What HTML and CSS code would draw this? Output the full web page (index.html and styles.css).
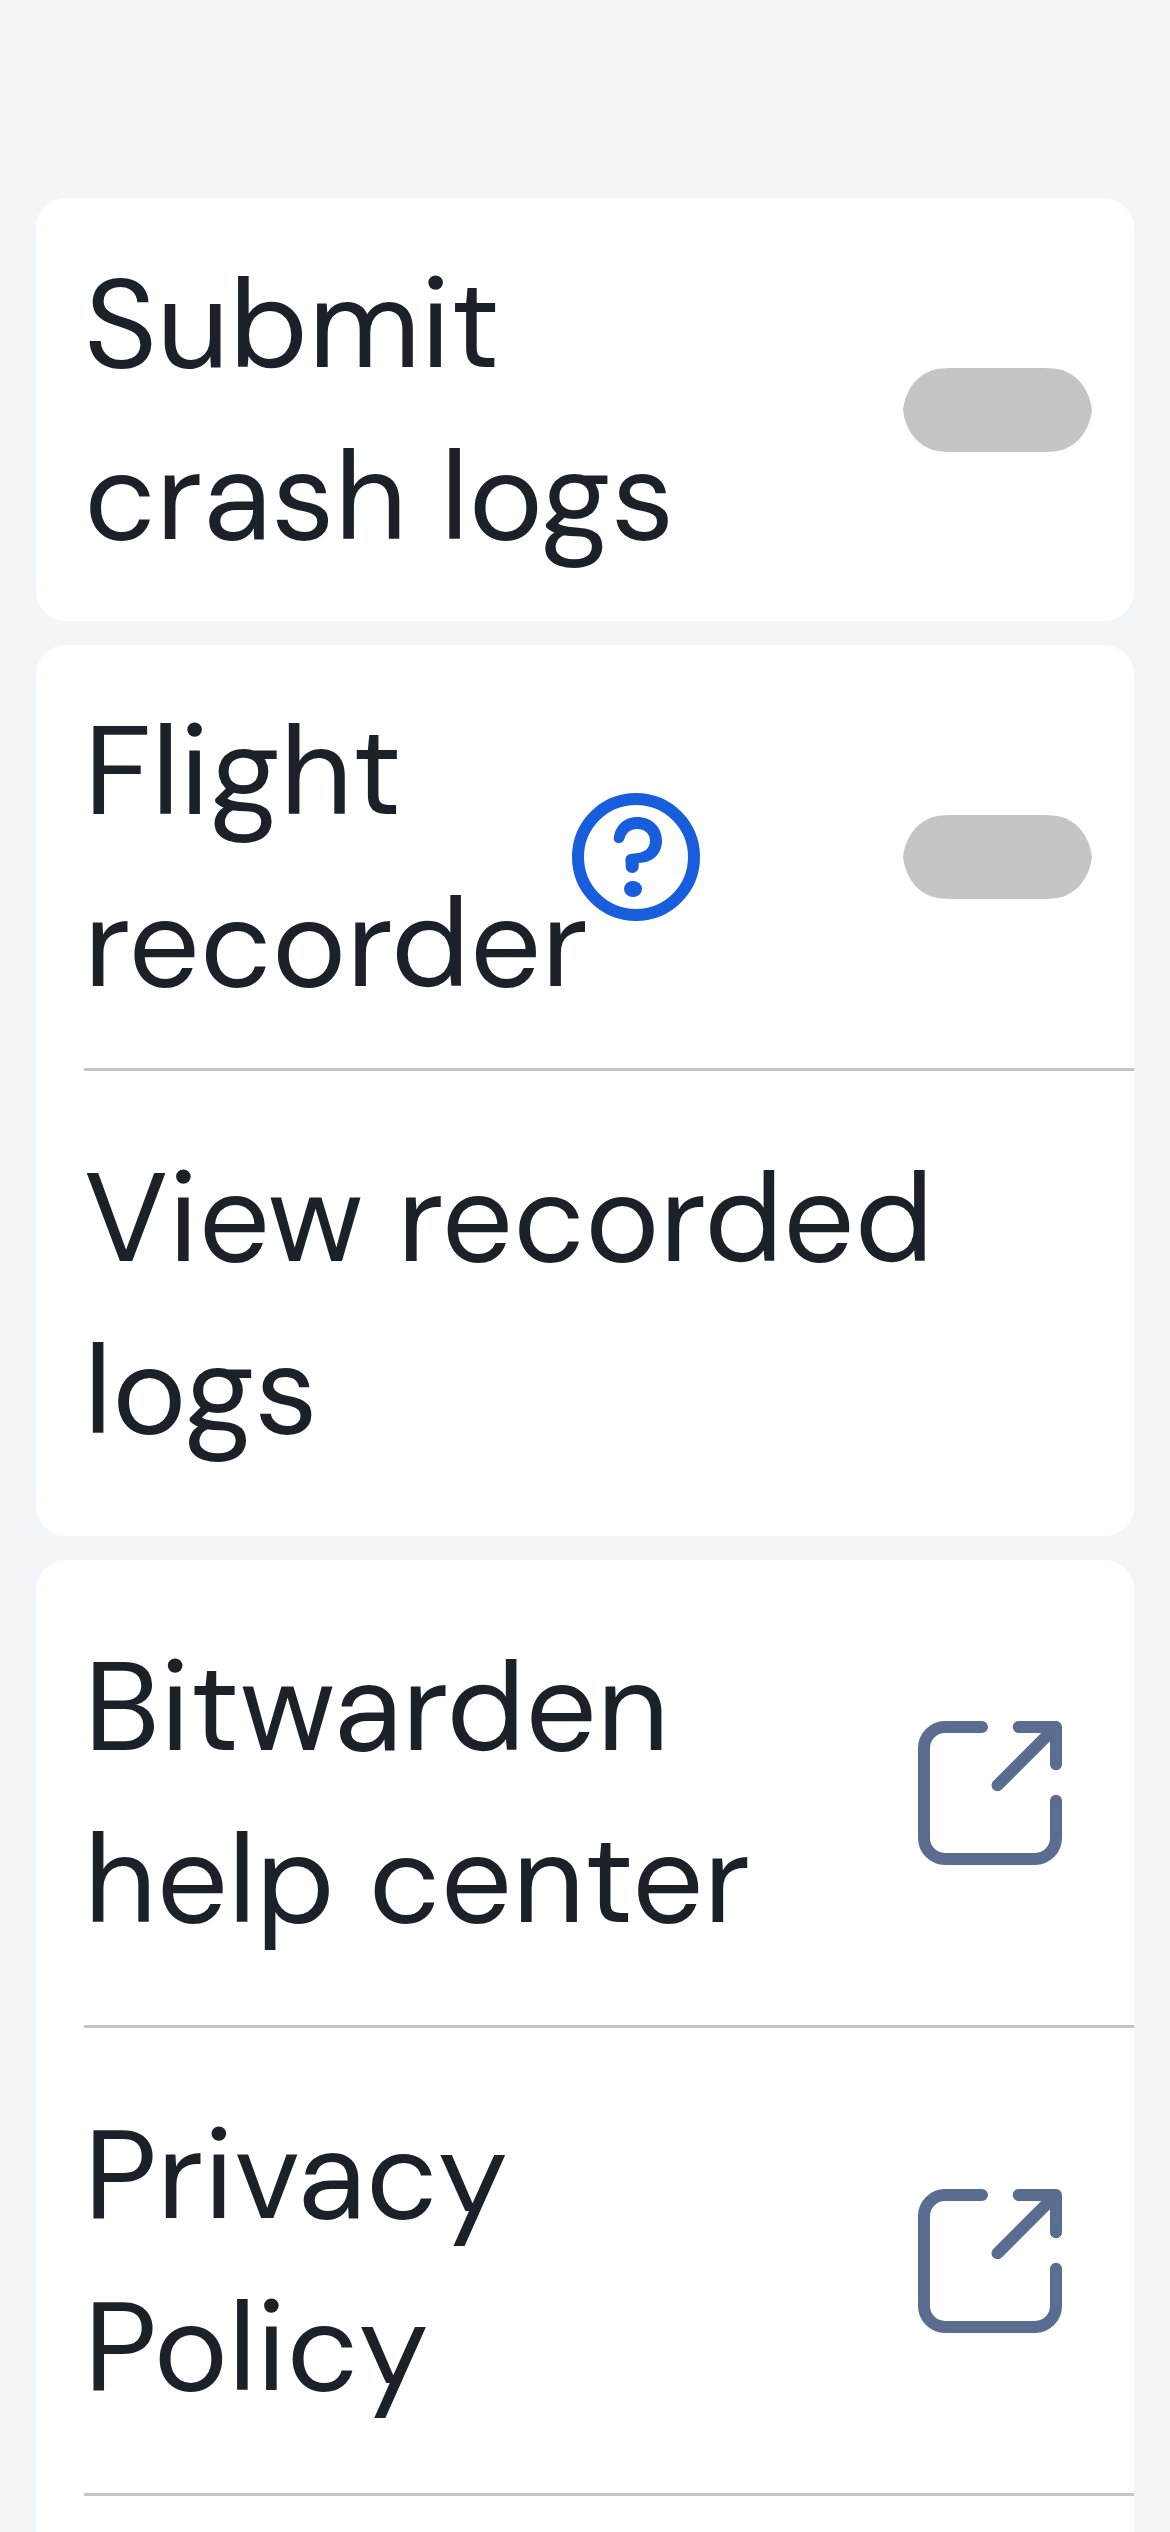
FILE: index.html
```html
<!DOCTYPE html>
<html lang="en">
<head>
<meta charset="utf-8">
<title>About</title>
<link rel="stylesheet" href="styles.css">
</head>
<body>
<svg class="defs" aria-hidden="true">
  <symbol id="external" viewBox="0 0 144 144">
    <path d="M64 6H27A21 21 0 0 0 6 27V117A21 21 0 0 0 27 138H117A21 21 0 0 0 138 117V79.7M100.7 6H138V43.3M79.5 64.3 137 6.8" fill="none" stroke="currentColor" stroke-width="12" stroke-linecap="round" stroke-linejoin="round"/>
  </symbol>
  <symbol id="track" viewBox="0 0 189 84">
    <path d="M54 0H135C145 0 155 0 163 3.5C177 9.5 187 24 189 42C187 60 177 74.5 163 80.5C155 84 145 84 135 84H54C44 84 34 84 26 80.5C12 74.5 2 60 0 42C2 24 12 9.5 26 3.5C34 0 44 0 54 0Z" fill="currentColor"/>
  </symbol>
</svg>
<main class="page">
  <section class="card">
    <div class="row row-toggle">
      <div class="label">Submit<br>crash logs</div>
      <svg class="toggle"><use href="#track"/></svg>
    </div>
  </section>

  <section class="card">
    <div class="row row-toggle">
      <div class="label label-help">Flight<br>recorder</div>
      <svg class="help" viewBox="0 0 128 128">
        <circle cx="64" cy="64" r="58" fill="none" stroke="currentColor" stroke-width="12"/>
        <path fill="currentColor" d="M41.7 45.5C43 33 52 24 65 24C80 24 90 34.5 90 47.5C90 61 81 69.5 66.7 70V73.5C66.7 77 64 80 60.3 80C56.5 80 53.7 77 53.7 73.5L53.4 67C53.4 63 56 60.8 60 60.7C72 60.3 78 56 78 47.5C78 40.5 72.5 36 65 36C58.5 36 54.5 39.5 52.5 45.5C51.5 48.5 49.5 50 47 50C44 50 41.5 48 41.7 45.5Z"/>
        <ellipse cx="61" cy="96" rx="9" ry="8" fill="currentColor"/>
      </svg>
      <svg class="toggle"><use href="#track"/></svg>
    </div>
    <hr class="divider">
    <div class="row row-link">
      <div class="label">View recorded<br>logs</div>
    </div>
  </section>

  <section class="card">
    <div class="row row-link">
      <div class="label">Bitwarden<br>help center</div>
      <svg class="external"><use href="#external"/></svg>
    </div>
    <hr class="divider">
    <div class="row row-link">
      <div class="label">Privacy<br>Policy</div>
      <svg class="external"><use href="#external"/></svg>
    </div>
    <hr class="divider">
    <div class="row row-link"></div>
  </section>
</main>
</body>
</html>
```
FILE: styles.css
```css
* { box-sizing: border-box; }

body {
  margin: 0;
  background: #f3f6f9;
  color: #1b2029;
  font-family: "DM Sans", "Open Sans", sans-serif;
  font-size: 126px;
  line-height: 172px;
}

.defs { display: none; }

.page {
  display: flex;
  flex-direction: column;
  gap: 24px;
  height: 2532px;
  padding: 198px 36px 0;
  overflow: hidden;
}

.card {
  flex: none;
  border-radius: 30px;
  background: #fff;
}

.row {
  display: flex;
  align-items: center;
  padding-top: 1px;
  padding-left: 48px;
}

.row-toggle { height: 423px; padding-right: 42px; }
.row-link { height: 465px; padding-right: 72px; }

.label { white-space: nowrap; }
.label-help { width: 488px; }

.divider {
  height: 3px;
  margin: 0 0 0 48px;
  border: 0;
  background: #c6c6c6;
}

.toggle {
  flex: none;
  width: 189px;
  height: 84px;
  margin-left: auto;
  color: #c5c5c7;
}

.help {
  flex: none;
  width: 128px;
  height: 128px;
  color: #175ddc;
}

.external {
  flex: none;
  width: 144px;
  height: 144px;
  margin-left: auto;
  color: #5a6d91;
}
```
